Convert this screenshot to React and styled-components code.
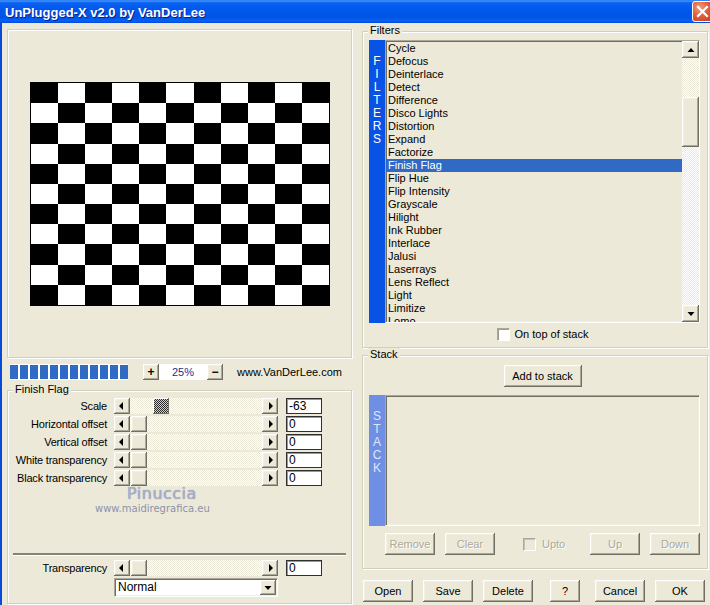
import React from 'react';
import styled, { createGlobalStyle, css } from 'styled-components';

const GlobalStyle = createGlobalStyle`
  html, body { margin: 0; padding: 0; }
  body {
    width: 710px;
    height: 605px;
    overflow: hidden;
    background: #ece9d8;
    font-family: "Liberation Sans", Arial, sans-serif;
    font-size: 11px;
    color: #000;
  }
  * { box-sizing: border-box; }
`;

const raised = css`
  background: #ece9d8;
  box-shadow: inset -1px -1px #716f64, inset 1px 1px #fff, inset -2px -2px #aca899, inset 2px 2px #f1efe2;
`;

const sunken = css`
  border: 1px solid;
  border-color: #aca899 #fff #fff #aca899;
  box-shadow: inset 1px 1px #716f64, inset -1px -1px #f1efe2;
`;

const etched = css`
  border: 1px solid #d0d0bf;
  box-shadow: inset 1px 1px #fff, 1px 1px #fff;
`;

const dither = (a, b) => css`
  background: repeating-conic-gradient(${a} 0 25%, ${b} 0 50%) 0 0 / 2px 2px;
`;

const filters = [
  'Cycle', 'Defocus', 'Deinterlace', 'Detect', 'Difference', 'Disco Lights',
  'Distortion', 'Expand', 'Factorize', 'Finish Flag', 'Flip Hue', 'Flip Intensity',
  'Grayscale', 'Hilight', 'Ink Rubber', 'Interlace', 'Jalusi', 'Laserrays',
  'Lens Reflect', 'Light', 'Limitize', 'Lomo',
];

const params = [
  { label: 'Scale', value: '-63', offset: 23, focused: true },
  { label: 'Horizontal offset', value: '0', offset: 1 },
  { label: 'Vertical offset', value: '0', offset: 1 },
  { label: 'White transparency', value: '0', offset: 1 },
  { label: 'Black transparency', value: '0', offset: 1 },
];

function Arrow({ dir }) {
  const pts = {
    left: '5,0 1,4 5,8',
    right: '3,0 7,4 3,8',
    up: '0.5,6 4,2 7.5,6',
    down: '0.5,2 4,6 7.5,2',
  }[dir];
  return (
    <svg width="8" height="8" viewBox="0 0 8 8">
      <polygon points={pts} fill="#000" />
    </svg>
  );
}

function Checkerboard() {
  const cells = [];
  for (let r = 0; r < 11; r++) {
    for (let c = 0; c < 11; c++) {
      if ((r + c) % 2 === 0) cells.push(<rect key={`${r}-${c}`} x={c} y={r} width="1" height="1" />);
    }
  }
  return (
    <Board width="300" height="224" viewBox="0 0 11 11" preserveAspectRatio="none" shapeRendering="crispEdges">
      <rect width="11" height="11" fill="#fff" />
      <g fill="#000">{cells}</g>
    </Board>
  );
}

function Slider({ offset, focused }) {
  return (
    <SliderBar>
      <ArrowButton><Arrow dir="left" /></ArrowButton>
      <Track><Thumb $offset={offset} $focused={focused} /></Track>
      <ArrowButton><Arrow dir="right" /></ArrowButton>
    </SliderBar>
  );
}

export default function App() {
  return (
    <Window>
      <GlobalStyle />
      <TitleBar>
        <Title>UnPlugged-X v2.0 by VanDerLee</Title>
        <CloseButton>
          <svg width="19" height="19" viewBox="0 0 19 19">
            <path d="M5 5 L14 14 M14 5 L5 14" stroke="#fff" strokeWidth="2.2" strokeLinecap="square" />
          </svg>
        </CloseButton>
      </TitleBar>

      <Body>
        <LeftColumn>
          <Preview>
            <Checkerboard />
          </Preview>

          <ZoomRow>
            <Progress>
              {Array.from({ length: 12 }).map((_, i) => <Segment key={i} />)}
            </Progress>
            <SmallButton $ml={15}>+</SmallButton>
            <ZoomValue>25%</ZoomValue>
            <SmallButton>−</SmallButton>
            <SiteLink>www.VanDerLee.com</SiteLink>
          </ZoomRow>

          <FinishGroup>
            <Caption>Finish Flag</Caption>
            <ParamList>
              {params.map((p) => (
                <ParamRow key={p.label}>
                  <ParamLabel>{p.label}</ParamLabel>
                  <Slider offset={p.offset} focused={p.focused} />
                  <ValueBox>{p.value}</ValueBox>
                </ParamRow>
              ))}
            </ParamList>

            <Watermark>
              <WatermarkName>Pinuccia</WatermarkName>
              <WatermarkUrl>www.maidiregrafica.eu</WatermarkUrl>
            </Watermark>

            <Separator />

            <ParamRow $mt={4}>
              <ParamLabel>Transparency</ParamLabel>
              <Slider offset={1} />
              <ValueBox>0</ValueBox>
            </ParamRow>
            <Dropdown>
              <DropdownText>Normal</DropdownText>
              <DropdownButton><Arrow dir="down" /></DropdownButton>
            </Dropdown>
          </FinishGroup>
        </LeftColumn>

        <RightColumn>
          <FiltersGroup>
            <Caption>Filters</Caption>
            <GroupGrid>
              <Strip $color="#0852e6" $text="#fff">
                {'FILTERS'.split('').map((ch, i) => <span key={i}>{ch}</span>)}
              </Strip>
              <ListBox $height={283}>
                <Items>
                  {filters.map((f) => (
                    <Item key={f} $selected={f === 'Finish Flag'}>{f}</Item>
                  ))}
                </Items>
                <ScrollBar>
                  <ScrollButton><Arrow dir="up" /></ScrollButton>
                  <ScrollTrack $h={39} />
                  <ScrollThumb />
                  <ScrollTrack $grow />
                  <ScrollButton><Arrow dir="down" /></ScrollButton>
                </ScrollBar>
              </ListBox>
              <CheckRow>
                <CheckBox />
                <span>On top of stack</span>
              </CheckRow>
            </GroupGrid>
          </FiltersGroup>

          <StackGroup>
            <Caption>Stack</Caption>
            <GroupGrid>
              <AddButton $w={78}>Add to stack</AddButton>
              <Strip $color="#6f8fe4" $text="#dfe6fa" $mt={8}>
                {'STACK'.split('').map((ch, i) => <span key={i}>{ch}</span>)}
              </Strip>
              <ListBox $height={131} $mt={8} />
              <StackActions>
                <PushButton $w={50} disabled>Remove</PushButton>
                <PushButton $w={50} $ml={10} disabled>Clear</PushButton>
                <UptoCheck>
                  <CheckBox $disabled />
                  <span>Upto</span>
                </UptoCheck>
                <PushButton $w={50} $ml="auto" disabled>Up</PushButton>
                <PushButton $w={50} $ml={10} disabled>Down</PushButton>
              </StackActions>
            </GroupGrid>
          </StackGroup>

          <DialogButtons>
            <PushButton $w={50}>Open</PushButton>
            <PushButton $w={50} $ml={10}>Save</PushButton>
            <PushButton $w={50} $ml={10}>Delete</PushButton>
            <PushButton $w={30} $ml={17}>?</PushButton>
            <PushButton $w={50} $ml={15}>Cancel</PushButton>
            <PushButton $w={50} $ml={10}>OK</PushButton>
          </DialogButtons>
        </RightColumn>
      </Body>
    </Window>
  );
}

const Window = styled.div`
  width: 710px;
  height: 605px;
  display: flex;
  flex-direction: column;
  overflow: hidden;
`;

const TitleBar = styled.header`
  flex: none;
  height: 23px;
  display: flex;
  align-items: center;
  padding-left: 5px;
  background: linear-gradient(180deg, #2a7cf2 0%, #3d92ff 5%, #0a62f0 12%, #0058ee 40%, #0054e3 75%, #0a60f4 92%, #0045d8 100%);
`;

const Title = styled.h1`
  margin: 0;
  padding-top: 1px;
  font: bold 13px "Liberation Sans", Arial, sans-serif;
  color: #fff;
  text-shadow: 1px 1px #0a1e8c;
`;

const CloseButton = styled.div`
  margin-left: auto;
  margin-right: -3px;
  width: 21px;
  height: 21px;
  display: flex;
  align-items: center;
  justify-content: center;
  border: 1px solid #fff;
  border-radius: 3px;
  background: radial-gradient(circle at 35% 30%, #f0a080 0%, #e2603c 45%, #c8391c 100%);
`;

const Body = styled.main`
  flex: 1;
  display: flex;
  gap: 10px;
  border-left: 2px solid #0a48d8;
  padding: 0 2px 0 5px;
`;

const LeftColumn = styled.section`
  width: 345px;
  display: flex;
  flex-direction: column;
  padding-top: 6px;
`;

const Preview = styled.div`
  ${etched};
  height: 329px;
  display: flex;
  align-items: center;
  justify-content: center;
`;

const Board = styled.svg`
  display: block;
  border: 1px solid #000;
`;

const ZoomRow = styled.div`
  margin-top: 6px;
  height: 16px;
  display: flex;
  align-items: center;
`;

const Progress = styled.div`
  width: 118px;
  height: 16px;
  margin-left: 3px;
  display: flex;
  gap: 2px;
  padding: 1px 0;
  background: #fff;
`;

const Segment = styled.span`
  flex: 1;
  background: #316ac5;
`;

const SmallButton = styled.span`
  ${raised};
  width: 16px;
  height: 16px;
  margin-left: ${(p) => p.$ml || 0}px;
  display: flex;
  align-items: center;
  justify-content: center;
  font-size: 12px;
  font-weight: bold;
  line-height: 1;
`;

const ZoomValue = styled.span`
  width: 48px;
  height: 16px;
  background: #fff;
  color: #1c2f8c;
  text-align: center;
  line-height: 16px;
  font-size: 11px;
`;

const SiteLink = styled.span`
  margin-left: 14px;
  font-size: 11px;
`;

const GroupBox = styled.div`
  ${etched};
  position: relative;
`;

const Caption = styled.span`
  position: absolute;
  top: -8px;
  left: 5px;
  padding: 0 2px;
  background: #ece9d8;
  line-height: 13px;
  font-size: 11px;
`;

const FinishGroup = styled(GroupBox)`
  flex: 1;
  margin-top: 10px;
  margin-bottom: 1px;
  display: flex;
  flex-direction: column;
  padding: 7px 0 6px 0;
`;

const ParamList = styled.div`
  display: flex;
  flex-direction: column;
  gap: 2px;
`;

const ParamRow = styled.div`
  display: flex;
  align-items: center;
  height: 16px;
  margin-top: ${(p) => p.$mt || 0}px;
`;

const ParamLabel = styled.span`
  width: 99px;
  margin-right: 7px;
  text-align: right;
  white-space: nowrap;
  letter-spacing: -0.2px;
  line-height: 16px;
`;

const SliderBar = styled.div`
  display: flex;
  width: 164px;
  height: 16px;
`;

const ArrowButton = styled.span`
  ${raised};
  flex: none;
  width: 16px;
  height: 16px;
  display: flex;
  align-items: center;
  justify-content: center;
`;

const Track = styled.span`
  flex: 1;
  display: flex;
  ${dither('#fff', '#ece9d8')};
`;

const Thumb = styled.span`
  width: 16px;
  height: 16px;
  margin-left: ${(p) => p.$offset}px;
  ${(p) =>
    p.$focused
      ? css`
          background: repeating-conic-gradient(#2a2a2a 0 25%, #cfcfcf 0 50%) 0 0 / 2px 2px;
          box-shadow: inset -1px -1px #716f64, inset 1px 1px #fff;
        `
      : raised};
`;

const ValueBox = styled.span`
  width: 36px;
  height: 16px;
  margin-left: 8px;
  background: #fff;
  border: 1px solid #303030;
  box-shadow: inset 1px 1px #9a9890;
  padding-left: 2px;
  font-size: 12px;
  line-height: 14px;
`;

const Watermark = styled.div`
  margin-top: -2px;
  display: flex;
  flex-direction: column;
  align-items: flex-start;
`;

const WatermarkName = styled.span`
  margin-left: 119px;
  font-family: "DejaVu Sans", Verdana, sans-serif;
  font-size: 16px;
  letter-spacing: 0.5px;
  line-height: 19px;
  color: #a9afd3;
  text-shadow: 0 0 1px #7b80a8;
`;

const WatermarkUrl = styled.span`
  margin-left: 87px;
  font-family: "DejaVu Sans", Verdana, sans-serif;
  font-size: 10px;
  line-height: 12px;
  color: #8d91ab;
`;

const Separator = styled.hr`
  margin: auto 5px 0 5px;
  height: 0;
  border: 0;
  border-top: 2px solid #84827a;
  border-bottom: 1px solid #fff;
`;

const Dropdown = styled.div`
  margin: 2px 0 0 106px;
  width: 164px;
  height: 19px;
  display: flex;
  background: #fff;
  ${sunken};
`;

const DropdownText = styled.span`
  flex: 1;
  padding-left: 3px;
  line-height: 17px;
  font-size: 12px;
`;

const DropdownButton = styled.span`
  ${raised};
  width: 16px;
  margin: 1px 1px 1px 0;
  display: flex;
  align-items: center;
  justify-content: center;
`;

const RightColumn = styled.section`
  width: 346px;
  display: flex;
  flex-direction: column;
  padding-top: 8px;
`;

const FiltersGroup = styled(GroupBox)`
  height: 317px;
  padding: 8px 7px 0 6px;
`;

const StackGroup = styled(GroupBox)`
  height: 214px;
  margin-top: 7px;
  padding: 9px 7px 0 6px;
`;

const GroupGrid = styled.div`
  display: grid;
  grid-template-columns: 16px 1fr;
`;

const Strip = styled.div`
  grid-column: 1;
  margin-top: ${(p) => p.$mt || 0}px;
  display: flex;
  flex-direction: column;
  align-items: center;
  padding-top: 15px;
  background: ${(p) => p.$color};
  color: ${(p) => p.$text};
  font-size: 12px;
  line-height: 13px;
`;

const ListBox = styled.div`
  grid-column: 2;
  height: ${(p) => p.$height}px;
  margin-top: ${(p) => p.$mt || 0}px;
  display: flex;
  background: #ece9d8;
  ${sunken};
`;

const Items = styled.ul`
  flex: 1;
  margin: 0;
  padding: 1px 0 0 0;
  list-style: none;
  overflow: hidden;
`;

const Item = styled.li`
  height: 13px;
  line-height: 13px;
  padding-left: 2px;
  white-space: nowrap;
  background: ${(p) => (p.$selected ? '#316ac5' : 'transparent')};
  color: ${(p) => (p.$selected ? '#fff' : '#000')};
`;

const ScrollBar = styled.div`
  width: 17px;
  display: flex;
  flex-direction: column;
`;

const ScrollButton = styled.span`
  ${raised};
  flex: none;
  height: 17px;
  display: flex;
  align-items: center;
  justify-content: center;
`;

const ScrollTrack = styled.span`
  ${dither('#fff', '#ece9d8')};
  height: ${(p) => (p.$h ? `${p.$h}px` : 'auto')};
  flex: ${(p) => (p.$grow ? 1 : 'none')};
`;

const ScrollThumb = styled.span`
  ${raised};
  flex: none;
  height: 50px;
`;

const CheckRow = styled.label`
  grid-column: 2;
  margin-top: 5px;
  height: 13px;
  display: flex;
  align-items: center;
  justify-content: center;
  gap: 5px;
  line-height: 13px;
`;

const CheckBox = styled.span`
  width: 13px;
  height: 13px;
  flex: none;
  background: ${(p) => (p.$disabled ? '#ece9d8' : '#fff')};
  border: 1px solid;
  border-color: #aca899 #fff #fff #aca899;
  box-shadow: inset 1px 1px ${(p) => (p.$disabled ? '#c4c2b8' : '#9d9b90')};
`;

const PushButton = styled.button`
  ${raised};
  border: 0;
  padding: 0;
  width: ${(p) => p.$w}px;
  height: 22px;
  margin-left: ${(p) => (p.$ml === 'auto' ? 'auto' : `${p.$ml || 0}px`)};
  font-family: "Liberation Sans", Arial, sans-serif;
  font-size: 11px;
  color: #000;
  &:disabled {
    color: #aca899;
    text-shadow: 1px 1px #fff;
  }
`;

const AddButton = styled(PushButton)`
  grid-column: 2;
  justify-self: center;
`;

const StackActions = styled.div`
  grid-column: 2;
  margin-top: 7px;
  display: flex;
  align-items: center;
`;

const UptoCheck = styled.label`
  margin-left: 28px;
  display: flex;
  align-items: center;
  gap: 6px;
  color: #aca899;
  text-shadow: 1px 1px #fff;
`;

const DialogButtons = styled.div`
  margin-top: 11px;
  margin-left: 1px;
  display: flex;
`;
